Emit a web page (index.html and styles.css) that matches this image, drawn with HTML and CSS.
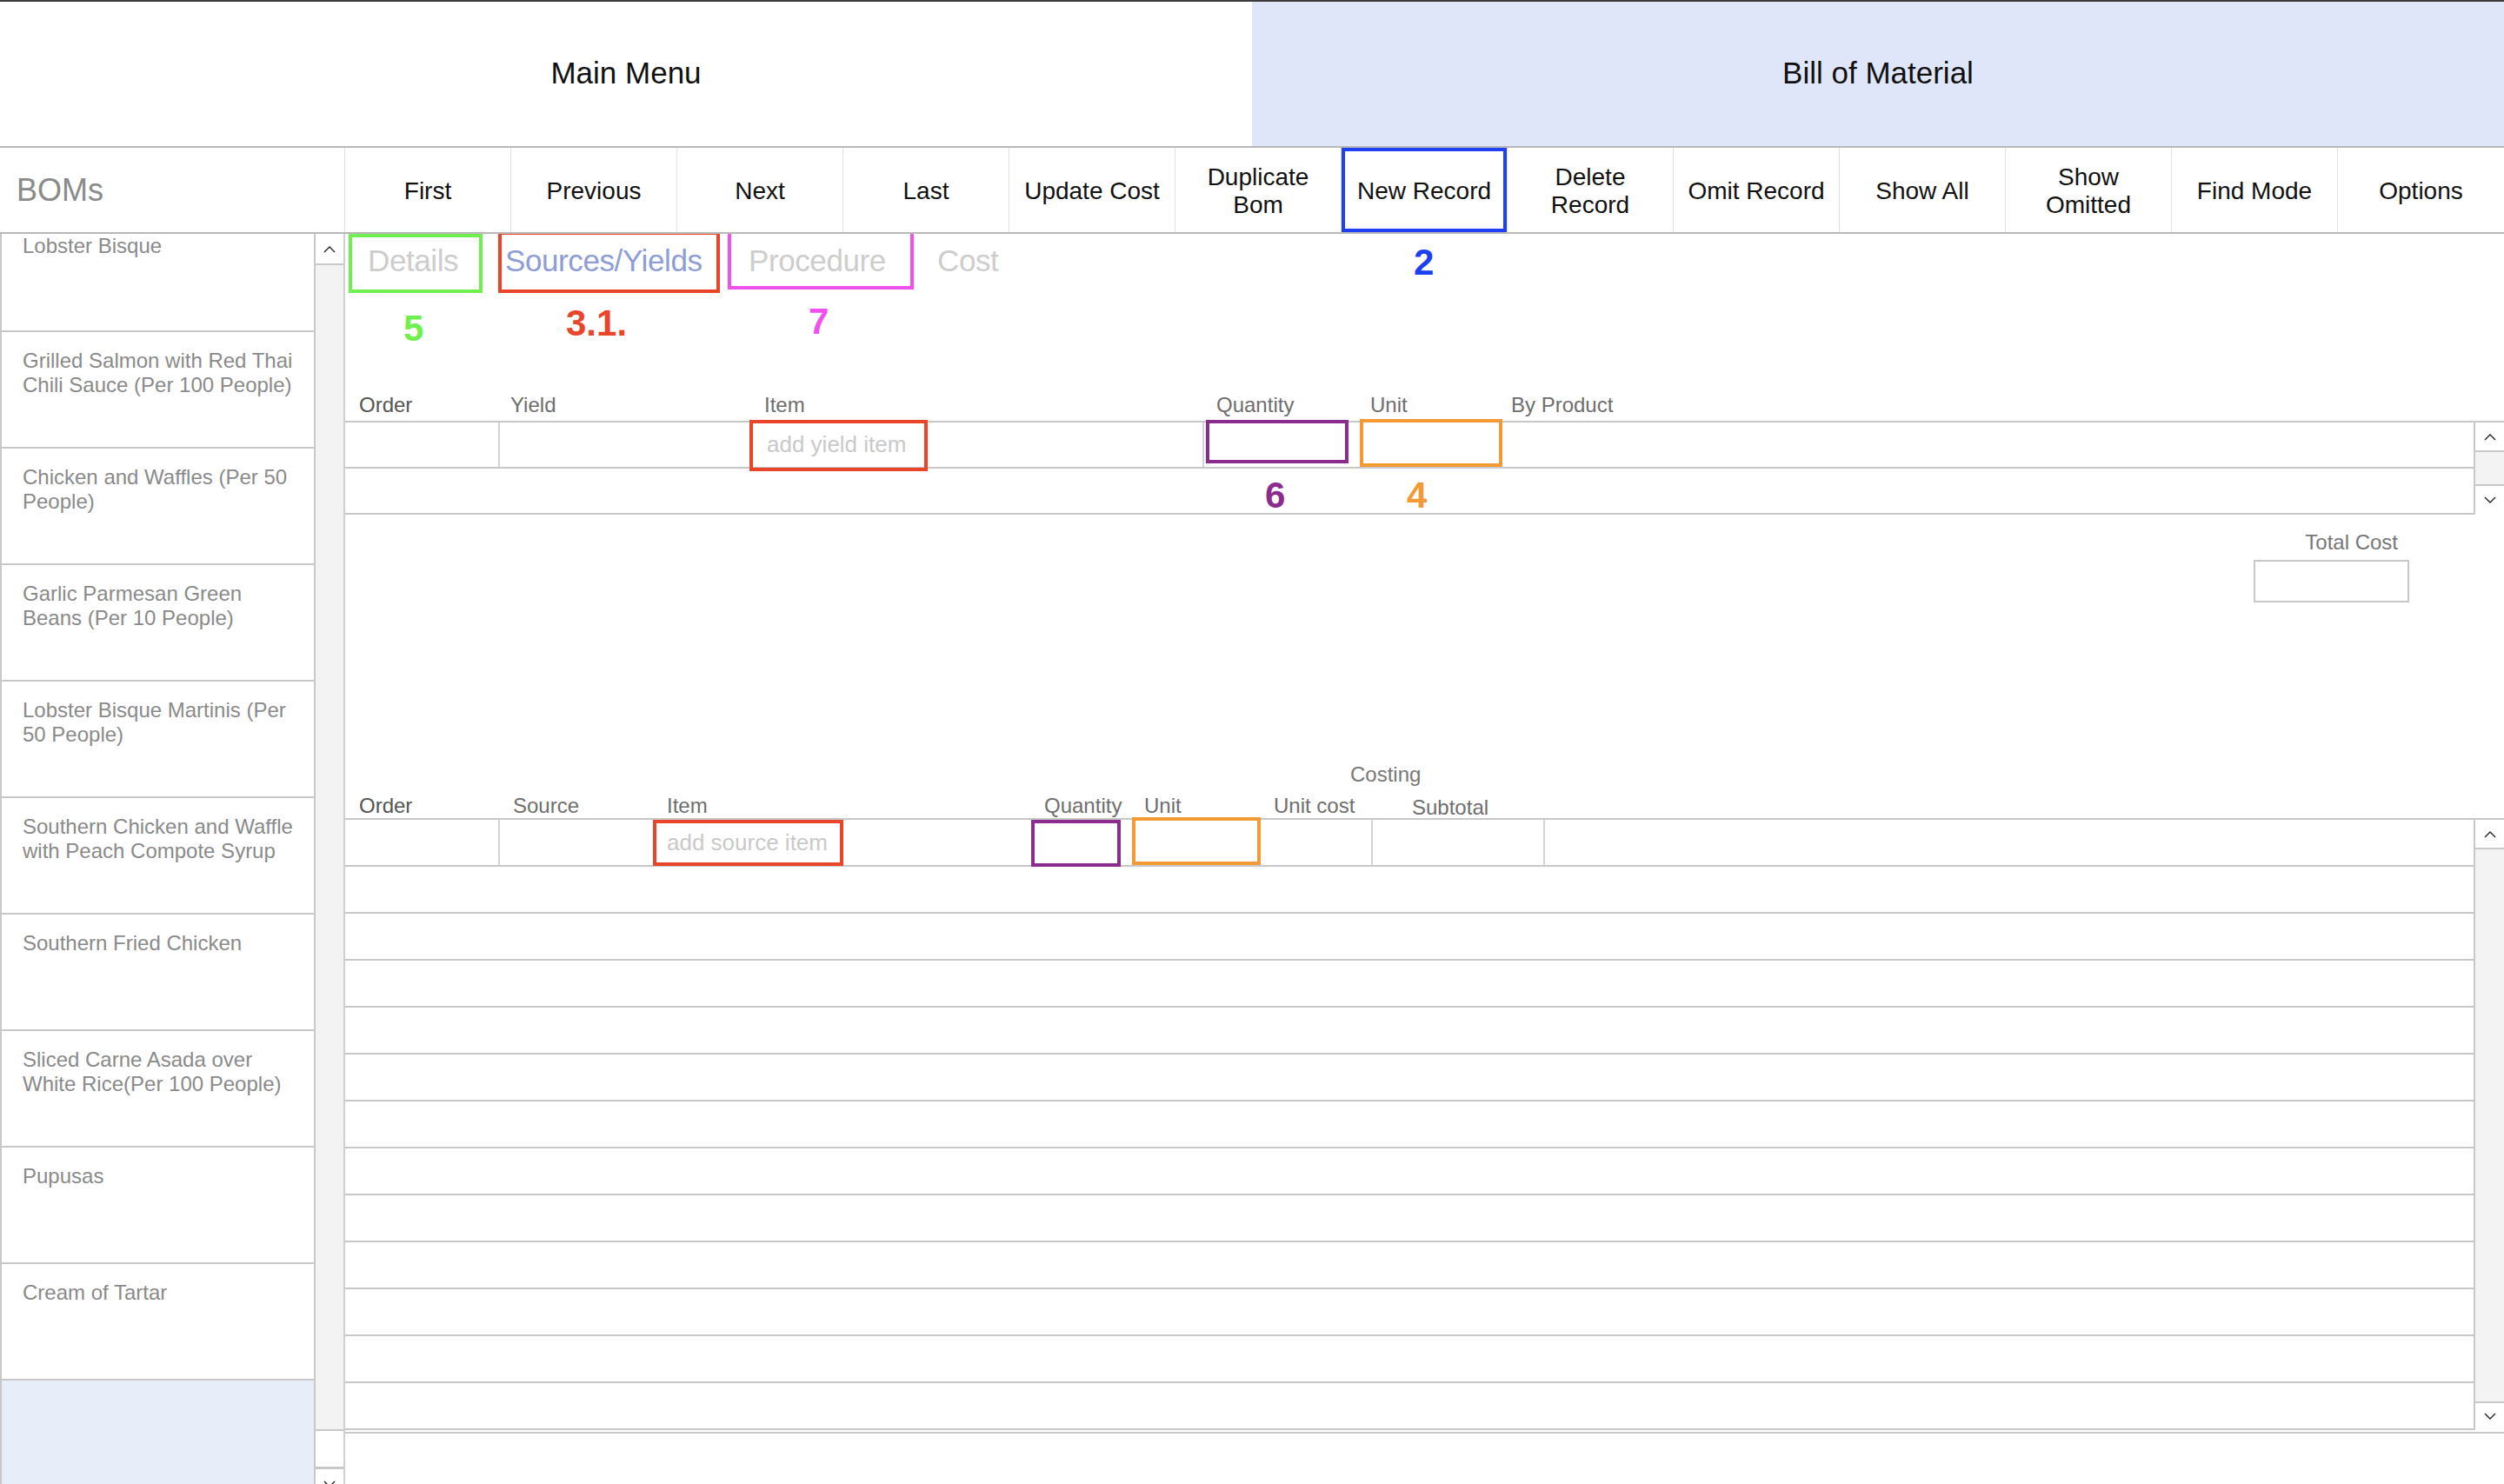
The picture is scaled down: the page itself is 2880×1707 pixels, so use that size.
FILE: index.html
```html
<!DOCTYPE html>
<html lang="en">
<head>
<meta charset="utf-8">
<title>Bill of Material</title>
<link rel="stylesheet" href="styles.css">
</head>
<body>
<div class="app">
  <header class="topbar">
    <div class="nav-tab">Main Menu</div>
    <div class="nav-tab nav-tab--active">Bill of Material</div>
  </header>

  <div class="toolbar">
    <div class="toolbar-title">BOMs</div>
    <div class="tb-btn">First</div>
    <div class="tb-btn">Previous</div>
    <div class="tb-btn">Next</div>
    <div class="tb-btn">Last</div>
    <div class="tb-btn">Update Cost</div>
    <div class="tb-btn">Duplicate<br>Bom</div>
    <div class="tb-btn tb-btn--marked">New Record</div>
    <div class="tb-btn">Delete<br>Record</div>
    <div class="tb-btn">Omit Record</div>
    <div class="tb-btn">Show All</div>
    <div class="tb-btn">Show<br>Omitted</div>
    <div class="tb-btn">Find Mode</div>
    <div class="tb-btn">Options</div>
  </div>

  <div class="workspace">
    <aside class="sidebar">
      <div class="bom-list">
        <div class="bom-item bom-item--partial">Lobster Bisque</div>
        <div class="bom-item">Grilled Salmon with Red Thai Chili Sauce (Per 100 People)</div>
        <div class="bom-item">Chicken and Waffles (Per 50 People)</div>
        <div class="bom-item">Garlic Parmesan Green Beans (Per 10 People)</div>
        <div class="bom-item">Lobster Bisque Martinis (Per 50 People)</div>
        <div class="bom-item">Southern Chicken and Waffle with Peach Compote Syrup</div>
        <div class="bom-item">Southern Fried Chicken</div>
        <div class="bom-item">Sliced Carne Asada over White Rice(Per 100 People)</div>
        <div class="bom-item">Pupusas</div>
        <div class="bom-item">Cream of Tartar</div>
        <div class="bom-list-fill"></div>
      </div>
      <div class="side-scroll">
        <div class="sb-btn sb-btn--up side-up"><svg width="14" height="9" viewBox="0 0 14 9"><polyline points="1,8 7,2 13,8" fill="none" stroke="#222" stroke-width="1.4"/></svg></div>
        <div class="sb-track side-track"></div>
        <div class="side-gap"></div>
        <div class="sb-btn side-down"><svg width="14" height="9" viewBox="0 0 14 9"><polyline points="1,1 7,7 13,1" fill="none" stroke="#222" stroke-width="1.4"/></svg></div>
      </div>
    </aside>

    <main class="detail">
      <div class="tabs">
        <div class="tab tab--details">Details</div>
        <div class="tab tab--sources">Sources/Yields</div>
        <div class="tab tab--procedure">Procedure</div>
        <div class="tab tab--cost">Cost</div>
      </div>

      <div class="labels yield-cols">
        <div class="lbl lbl--order">Order</div>
        <div class="lbl pl-12">Yield</div>
        <div class="lbl pl-17">Item</div>
        <div class="lbl pl-14">Quantity</div>
        <div class="lbl pl-21">Unit</div>
        <div class="lbl pl-12">By Product</div>
      </div>

      <div class="portal portal--yield">
        <div class="portal-rows">
          <div class="prow yield-cols">
            <div class="pcell line-r"></div>
            <div class="pcell"></div>
            <div class="pcell line-r">
              <span class="placeholder pl-20">add yield item</span>
              <span class="anno-box anno-red yield-item-box"></span>
            </div>
            <div class="pcell"><span class="anno-box anno-purple yield-qty-box"></span></div>
            <div class="pcell line-r"><span class="anno-box anno-orange yield-unit-box"></span></div>
            <div class="pcell"></div>
          </div>
          <div class="prow"></div>
        </div>
        <div class="vscroll">
          <div class="sb-btn yield-up"><svg width="14" height="9" viewBox="0 0 14 9"><polyline points="1,8 7,2 13,8" fill="none" stroke="#222" stroke-width="1.4"/></svg></div>
          <div class="sb-track yield-track"></div>
          <div class="sb-btn yield-down"><svg width="14" height="9" viewBox="0 0 14 9"><polyline points="1,1 7,7 13,1" fill="none" stroke="#222" stroke-width="1.4"/></svg></div>
        </div>
      </div>

      <div class="total-block">
        <div class="total-label">Total Cost</div>
        <div class="total-box"></div>
      </div>

      <div class="costing-line">Costing</div>

      <div class="labels source-cols">
        <div class="lbl lbl--order">Order</div>
        <div class="lbl pl-15">Source</div>
        <div class="lbl pl-16">Item</div>
        <div class="lbl pl-15">Quantity</div>
        <div class="lbl pl-14">Unit</div>
        <div class="lbl pl-15">Unit cost</div>
        <div class="lbl lbl--subtotal">Subtotal</div>
        <div class="lbl"></div>
      </div>

      <div class="portal portal--source">
        <div class="portal-rows">
          <div class="srow source-cols">
            <div class="pcell line-r"></div>
            <div class="pcell"></div>
            <div class="pcell">
              <span class="placeholder pl-16">add source item</span>
              <span class="anno-box anno-red source-item-box"></span>
            </div>
            <div class="pcell"><span class="anno-box anno-purple source-qty-box"></span></div>
            <div class="pcell"><span class="anno-box anno-orange source-unit-box"></span></div>
            <div class="pcell line-r"></div>
            <div class="pcell line-r"></div>
            <div class="pcell"></div>
          </div>
          <div class="srow"></div>
          <div class="srow"></div>
          <div class="srow"></div>
          <div class="srow"></div>
          <div class="srow"></div>
          <div class="srow"></div>
          <div class="srow"></div>
          <div class="srow"></div>
          <div class="srow"></div>
          <div class="srow"></div>
          <div class="srow"></div>
          <div class="srow"></div>
        </div>
        <div class="vscroll">
          <div class="sb-btn source-up"><svg width="14" height="9" viewBox="0 0 14 9"><polyline points="1,8 7,2 13,8" fill="none" stroke="#222" stroke-width="1.4"/></svg></div>
          <div class="sb-track source-track"></div>
          <div class="sb-btn source-down"><svg width="14" height="9" viewBox="0 0 14 9"><polyline points="1,1 7,7 13,1" fill="none" stroke="#222" stroke-width="1.4"/></svg></div>
        </div>
      </div>

      <span class="anno-num num-green n5">5</span>
      <span class="anno-num num-red n31">3.1.</span>
      <span class="anno-num num-magenta n7">7</span>
      <span class="anno-num num-blue n2">2</span>
      <span class="anno-num num-purple n6">6</span>
      <span class="anno-num num-orange n4">4</span>
    </main>
  </div>
</div>
</body>
</html>
```

FILE: styles.css
```css
* { box-sizing: border-box; }
html, body { margin: 0; padding: 0; }
body {
  width: 2880px;
  height: 1707px;
  overflow: hidden;
  background: #fff;
  font-family: "Liberation Sans", Arial, Helvetica, sans-serif;
  color: #111;
}
.app { display: flex; flex-direction: column; height: 1707px; }

/* Top navigation */
.topbar {
  display: flex;
  height: 170px;
  flex-shrink: 0;
  border-top: 2px solid #3c3c3c;
  border-bottom: 2px solid #b9b9b9;
}
.nav-tab {
  flex: 1;
  display: flex;
  align-items: center;
  justify-content: center;
  padding-bottom: 2px;
  font-size: 35px;
  color: #111;
}
.nav-tab--active { background: #e0e6f9; }

/* Toolbar */
.toolbar {
  display: flex;
  height: 99px;
  flex-shrink: 0;
  border-bottom: 2px solid #b9b9b9;
}
.toolbar-title {
  width: 397px;
  flex-shrink: 0;
  display: flex;
  align-items: center;
  padding-left: 19px;
  font-size: 36px;
  color: #8a8a8a;
  border-right: 1px solid #e2e2e2;
}
.tb-btn {
  width: 191px;
  flex-shrink: 0;
  display: flex;
  align-items: center;
  justify-content: center;
  text-align: center;
  padding-top: 2px;
  font-size: 28px;
  line-height: 32px;
  color: #111;
  border-right: 1px solid #e2e2e2;
}
.tb-btn:last-child { border-right: none; }
.tb-btn--marked { box-shadow: inset 0 0 0 4px #1f40f2; }

/* Workspace */
.workspace { display: flex; flex: 1; min-height: 0; }

.sidebar { display: flex; width: 397px; flex-shrink: 0; }
.bom-list {
  width: 363px;
  display: flex;
  flex-direction: column;
  overflow: hidden;
  border-left: 2px solid #c8c8c8;
  border-right: 2px solid #c8c8c8;
}
.bom-item {
  height: 134px;
  flex-shrink: 0;
  border-bottom: 2px solid #c8c8c8;
  padding: 19px 15px 0 24px;
  font-size: 24px;
  line-height: 28px;
  color: #8a8a8a;
}
.bom-item--partial { height: 113px; padding-top: 0; }
.bom-list-fill { flex: 1; background: #e7eef9; }

.side-scroll {
  width: 34px;
  display: flex;
  flex-direction: column;
  overflow: hidden;
  border-right: 2px solid #cfcfcf;
}
.sb-btn {
  flex-shrink: 0;
  display: flex;
  align-items: center;
  justify-content: center;
  background: #fff;
}
.sb-track { flex-shrink: 0; background: #f3f3f3; }
.side-up { height: 36px; border-bottom: 2px solid #c8c8c8; }
.side-track { height: 1339px; }
.side-gap {
  flex-shrink: 0;
  height: 46px;
  background: #fff;
  border-top: 2px solid #c8c8c8;
  border-bottom: 3px solid #c8c8c8;
}
.side-down { height: 34px; }

/* Detail area */
.detail {
  flex: 1;
  position: relative;
  display: flex;
  flex-direction: column;
  overflow: hidden;
}

.tabs {
  height: 183px;
  flex-shrink: 0;
  display: flex;
  align-items: flex-start;
}
.tab {
  font-size: 35px;
  line-height: 41px;
  letter-spacing: -0.4px;
  color: #cdcdcd;
  border: 4px solid transparent;
  white-space: nowrap;
  flex-shrink: 0;
}
.tab--details {
  margin-left: 4px;
  width: 154px;
  height: 68px;
  padding: 6px 0 0 18px;
  border-color: #70f04e;
}
.tab--sources {
  margin-left: 18px;
  margin-top: -3px;
  width: 255px;
  height: 71px;
  padding: 9px 0 0 4px;
  border-color: #e9452b;
  color: #8e9dd4;
}
.tab--procedure {
  margin-left: 9px;
  margin-top: -4px;
  width: 214px;
  height: 68px;
  padding: 10px 0 0 20px;
  border-color: #ef50f0;
}
.tab--cost {
  margin-left: 23px;
  height: 68px;
  padding-top: 6px;
}

/* Column labels */
.labels {
  flex-shrink: 0;
  height: 32px;
  font-size: 24px;
  line-height: 28px;
  color: #6e6e6e;
}
.source-cols.labels { height: 28px; }
.lbl { white-space: nowrap; }
.lbl--order { padding-left: 16px; color: #555; }
.lbl--subtotal { padding-left: 45px; margin-top: 2px; }
.pl-12 { padding-left: 12px; }
.pl-14 { padding-left: 14px; }
.pl-15 { padding-left: 15px; }
.pl-16 { padding-left: 16px; }
.pl-17 { padding-left: 17px; }
.pl-20 { padding-left: 20px; }
.pl-21 { padding-left: 21px; }

.yield-cols {
  display: grid;
  grid-template-columns: 178px 287px 523px 170px 171px 1fr;
}
.source-cols {
  display: grid;
  grid-template-columns: 178px 176px 435px 116px 148px 129px 198px 1fr;
}

/* Portals */
.portal {
  display: flex;
  flex-shrink: 0;
  border-top: 2px solid #c8c8c8;
}
.portal--yield { height: 108px; }
.portal--source {
  height: 708px;
  padding-bottom: 2px;
  border-bottom: 2px solid #c8c8c8;
}
.portal-rows { flex: 1; display: flex; flex-direction: column; }
.prow {
  height: 53px;
  flex-shrink: 0;
  border-bottom: 2px solid #c8c8c8;
}
.srow {
  height: 54px;
  flex-shrink: 0;
  border-bottom: 2px solid #c8c8c8;
}
.pcell {
  position: relative;
  display: flex;
  align-items: center;
}
.line-r { border-right: 2px solid #d4d4d4; }
.placeholder {
  font-size: 26px;
  color: #c9c9c9;
  white-space: nowrap;
}

.vscroll {
  width: 35px;
  flex-shrink: 0;
  display: flex;
  flex-direction: column;
  border-left: 2px solid #c8c8c8;
}
.yield-up { height: 34px; border-bottom: 2px solid #c8c8c8; }
.yield-track { height: 37px; }
.yield-down { height: 35px; border-top: 2px solid #c8c8c8; }
.source-up { height: 34px; border-bottom: 2px solid #c8c8c8; }
.source-track { height: 635px; }
.source-down { height: 33px; border-top: 2px solid #c8c8c8; }

/* Total cost */
.total-block {
  height: 285px;
  flex-shrink: 0;
  display: flex;
  flex-direction: column;
  align-items: flex-end;
  padding: 18px 109px 0 0;
}
.total-label {
  font-size: 24px;
  line-height: 28px;
  color: #777;
  margin-right: 13px;
}
.total-box {
  width: 179px;
  height: 49px;
  margin-top: 6px;
  border: 2px solid #c8c8c8;
}

.costing-line {
  height: 36px;
  flex-shrink: 0;
  padding-left: 1156px;
  font-size: 24px;
  line-height: 28px;
  color: #777;
}

/* Annotation overlays */
.anno-box {
  position: absolute;
  border: 4px solid;
}
.anno-red { border-color: #e9452b; }
.anno-purple { border-color: #8b2c8e; }
.anno-orange { border-color: #f39a35; }
.yield-item-box { left: 0; top: -3px; width: 205px; height: 59px; }
.yield-qty-box { left: 2px; top: -3px; width: 164px; height: 50px; }
.yield-unit-box { left: 9px; top: -4px; width: 164px; height: 55px; }
.source-item-box { left: 0; top: 0; width: 219px; height: 53px; }
.source-qty-box { left: 0; top: 0; width: 103px; height: 54px; }
.source-unit-box { left: 0; top: -3px; width: 148px; height: 55px; }

.anno-num {
  position: absolute;
  font-size: 42px;
  line-height: 42px;
  font-weight: bold;
  white-space: nowrap;
}
.num-green { color: #6ff04d; }
.num-red { color: #e9452b; }
.num-magenta { color: #ef50f0; }
.num-blue { color: #1e3ff2; }
.num-purple { color: #8b2c8e; }
.num-orange { color: #f39a35; }
.n5 { left: 67px; top: 88px; }
.n31 { left: 254px; top: 82px; }
.n7 { left: 533px; top: 80px; }
.n2 { left: 1229px; top: 12px; }
.n6 { left: 1058px; top: 280px; }
.n4 { left: 1221px; top: 280px; }
```
